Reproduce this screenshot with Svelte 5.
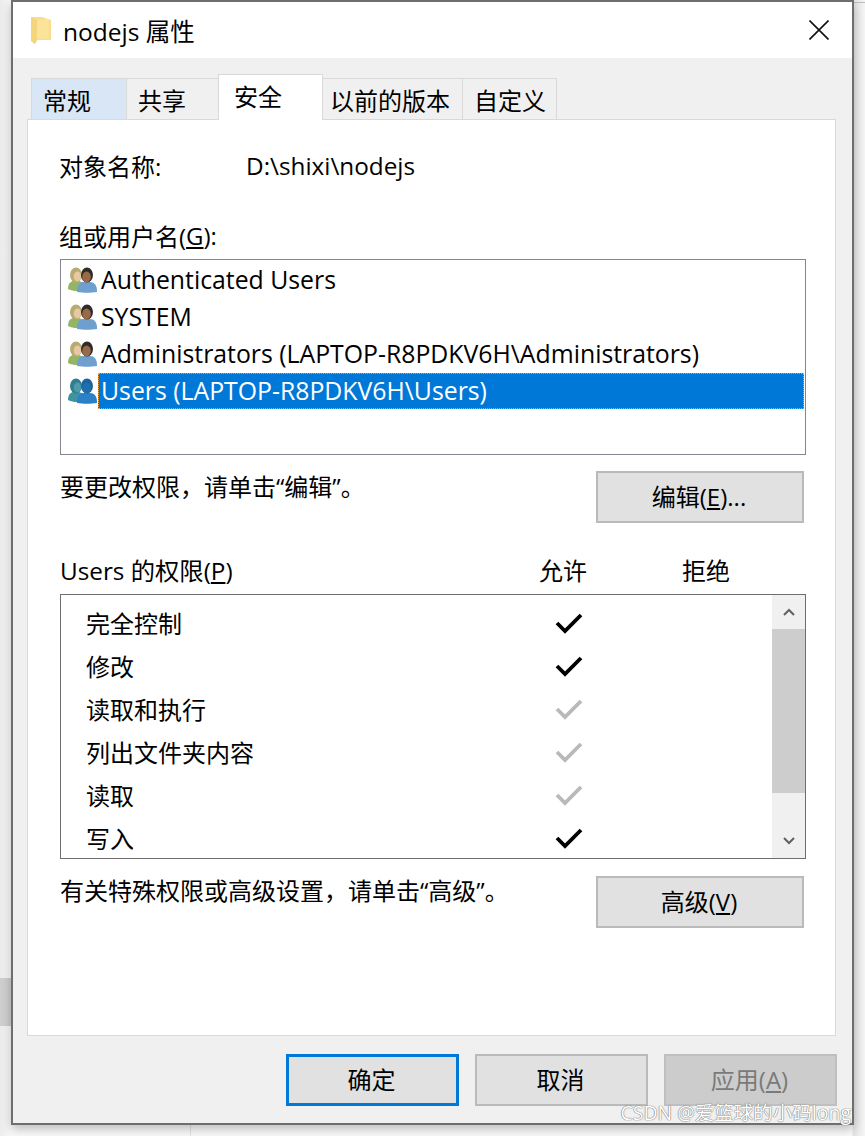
<script>
  const tabs = [
    { label: '常规', cls: 'hover' },
    { label: '共享', cls: '' },
    { label: '安全', cls: 'active' },
    { label: '以前的版本', cls: '' },
    { label: '自定义', cls: '' }
  ];

  const groups = [
    { name: 'Authenticated Users' },
    { name: 'SYSTEM' },
    { name: 'Administrators (LAPTOP-R8PDKV6H\\Administrators)' },
    { name: 'Users (LAPTOP-R8PDKV6H\\Users)', selected: true }
  ];

  // check: 0 = none, 1 = explicit, 2 = inherited (grey)
  const perms = [
    { name: '完全控制', check: 1 },
    { name: '修改', check: 1 },
    { name: '读取和执行', check: 2 },
    { name: '列出文件夹内容', check: 2 },
    { name: '读取', check: 2 },
    { name: '写入', check: 1 }
  ];
</script>

{#snippet users(selected)}
  <svg class="users" viewBox="0 0 29 26" width="29" height="26">
    <path d="M0 22c0-6 3-8 6-8h4c3 0 6 2 6 6v3c-5 1.500-11 1.500-16-1z" fill={selected ? '#3f93a0' : '#94b566'} />
    <ellipse cx="8" cy="8" rx="6" ry="7.500" fill={selected ? '#2f7f91' : '#b9ab6f'} />
    <ellipse cx="9.500" cy="9.500" rx="3.800" ry="5" fill={selected ? '#4f9aa8' : '#e6c9a0'} />
    <path d="M9 25c0-6 2-10 6-10h7c4 0 7 3 7 9v1c-6 1-14 1-20 0z" fill={selected ? '#2c80c8' : '#6f9fce'} />
    <ellipse cx="19" cy="8" rx="6" ry="7.500" fill={selected ? '#19659f' : '#2f2b28'} />
    <ellipse cx="18.500" cy="10" rx="4.300" ry="5.400" fill={selected ? '#1d70ad' : '#9a6a48'} />
  </svg>
{/snippet}

<div class="page">
  <div class="bg-block"></div>
  <div class="bg-line"></div>
  <div class="bg-top"></div>
  <div class="window">
    <header class="titlebar">
      <svg class="folder" viewBox="0 0 20 28" width="20" height="28">
        <path d="M0 1h11l9 3v20H6l-2 4-4-3z" fill="#f9dd8b" />
        <path d="M6 4l12-1v20H6z" fill="#fbe39a" />
        <path d="M0 1l6 3v20l-2 4-4-3z" fill="#f5d57c" />
      </svg>
      <span class="title">nodejs 属性</span>
      <svg class="close" viewBox="0 0 20 20" width="20" height="20">
        <path d="M0.500 0.500l19 19M19.500 0.500l-19 19" stroke="#111" stroke-width="1.600" fill="none" />
      </svg>
    </header>

    <div class="body">
      <nav class="tabs">
        {#each tabs as tab}
          <div class="tab {tab.cls}">{tab.label}</div>
        {/each}
      </nav>

      <section class="panel">
        <div class="object">
          <span class="object-label">对象名称:</span>
          <span class="object-path">D:\shixi\nodejs</span>
        </div>

        <div class="group-label">组或用户名(<u>G</u>):</div>
        <div class="listbox">
          {#each groups as group}
            <div class="group-row">
              {@render users(group.selected)}
              <span class="group-name" class:selected={group.selected}>{group.name}</span>
            </div>
          {/each}
        </div>

        <div class="action action-edit">
          <span>要更改权限，请单击“编辑”。</span>
          <button class="btn side">编辑(<u>E</u>)...</button>
        </div>

        <div class="perm-head">
          <span class="perm-title">Users 的权限(<u>P</u>)</span>
          <span class="perm-allow">允许</span>
          <span class="perm-deny">拒绝</span>
        </div>

        <div class="permbox">
          <div class="perm-rows">
            {#each perms as perm}
              <div class="perm-row">
                <span class="perm-name">{perm.name}</span>
                {#if perm.check}
                  <svg class="check" viewBox="0 0 28 22" width="28" height="22">
                    <path d="M2 11l8 8L26 3" fill="none" stroke={perm.check === 1 ? '#000' : '#b9b9b9'} stroke-width="3.800" />
                  </svg>
                {/if}
              </div>
            {/each}
          </div>
          <div class="scrollbar">
            <div class="arrow">
              <svg viewBox="0 0 12 8" width="12" height="8"><path d="M1 7l5-5 5 5" fill="none" stroke="#606060" stroke-width="2" /></svg>
            </div>
            <div class="thumb"></div>
            <div class="arrow">
              <svg viewBox="0 0 12 8" width="12" height="8"><path d="M1 1l5 5 5-5" fill="none" stroke="#606060" stroke-width="2" /></svg>
            </div>
          </div>
        </div>

        <div class="action action-adv">
          <span>有关特殊权限或高级设置，请单击“高级”。</span>
          <button class="btn side">高级(<u>V</u>)</button>
        </div>
      </section>

      <footer class="footer">
        <button class="btn foot default">确定</button>
        <button class="btn foot">取消</button>
        <button class="btn foot disabled">应用(<u>A</u>)</button>
      </footer>
    </div>
  </div>
  <div class="watermark">CSDN @爱篮球的小码long</div>
</div>

<style>
  :global(body) {
    margin: 0;
    background: #fff;
  }

  .page {
    position: relative;
    width: 865px;
    height: 1136px;
    overflow: hidden;
    padding-left: 11px;
    box-sizing: border-box;
    font-family: "Open Sans", "Noto Sans CJK SC", sans-serif;
    font-size: 24px;
    color: #000;
    background: linear-gradient(90deg, #ececec 0, #fafafa 11px, #fafafa 852px, #e4e4e4 853px, #f6f6f6 865px);
  }

  .bg-block {
    position: absolute;
    left: 0;
    top: 978px;
    width: 11px;
    height: 48px;
    background: #cfcfcf;
  }

  .bg-line {
    position: absolute;
    left: 190px;
    top: 1125px;
    width: 1px;
    height: 11px;
    background: #e2e2e2;
  }

  .bg-top {
    position: absolute;
    left: 853px;
    top: 2px;
    width: 12px;
    height: 1px;
    background: #bdbdbd;
  }

  .window {
    position: relative;
    width: 843px;
    height: 1125px;
    box-sizing: border-box;
    border: 2px solid #6e6e6e;
    background: #fff;
    display: flex;
    flex-direction: column;
    box-shadow: 0 4px 10px rgba(0, 0, 0, 0.25);
  }

  .titlebar {
    height: 56px;
    flex: none;
    display: flex;
    align-items: center;
    padding: 0 23px 0 18px;
  }

  .folder {
    margin-right: 12px;
  }

  .title {
    flex: 1;
    font-size: 24.500px;
  }

  .body {
    flex: 1;
    background: #f0f0f0;
    padding: 16px 14px 0;
    display: flex;
    flex-direction: column;
  }

  .tabs {
    display: flex;
    align-items: flex-end;
    height: 45px;
    padding-left: 5px;
    position: relative;
    z-index: 1;
  }

  .tab {
    height: 41px;
    box-sizing: border-box;
    border: 1px solid #d9d9d9;
    border-bottom: 0;
    margin-left: -1px;
    padding: 0 12px 0 11px;
    display: flex;
    align-items: center;
    font-size: 24px;
    white-space: nowrap;
    background: #f0f0f0;
  }

  .tab:nth-child(1) { width: 96px; }
  .tab:nth-child(2) { width: 93px; }
  .tab:nth-child(3) { width: 105px; }
  .tab:nth-child(4) { width: 141px; padding: 0 7px; }
  .tab:nth-child(5) { width: 95px; }

  .tab.hover {
    background: #d8e6f5;
  }

  .tab.active {
    background: #fff;
    height: 46px;
    margin-bottom: -1px;
    padding: 0 15px 5px;
  }

  .panel {
    height: 917px;
    box-sizing: border-box;
    background: #fff;
    border: 1px solid #d9d9d9;
    padding: 27px 30px 0 31px;
    flex: none;
    width: 809px;
  }

  .object {
    display: flex;
    height: 36px;
    align-items: center;
  }

  .object-label {
    width: 187px;
  }

  .object-path {
    font-size: 24.300px;
  }

  .group-label {
    height: 36px;
    margin-top: 34px;
    display: flex;
    align-items: center;
  }

  .listbox {
    margin: 6px 0 0 1px;
    height: 196px;
    width: 746px;
    box-sizing: border-box;
    border: 1px solid #828790;
    padding: 1px 1px;
  }

  .group-row {
    height: 37px;
    display: flex;
    align-items: center;
  }

  .users {
    flex: none;
    margin: 0 1px 0 6px;
  }

  .group-name {
    flex: 1;
    height: 36px;
    line-height: 35px;
    padding-left: 3px;
    box-sizing: border-box;
    white-space: nowrap;
    font-size: 24.800px;
  }

  .group-name.selected {
    background: #0078d7;
    color: #fff;
    outline: 1px dotted #f4a340;
    outline-offset: -1px;
  }

  .action {
    display: flex;
    justify-content: space-between;
    width: 744px;
    margin-left: 1px;
  }

  .action-edit {
    margin-top: 16px;
    height: 52px;
    line-height: 32px;
  }

  .action-adv {
    margin-top: 17px;
    height: 52px;
    line-height: 30px;
  }

  .btn {
    font: inherit;
    line-height: 1.2;
    color: #000;
    background: #e1e1e1;
    border: 2px solid #bababa;
    box-sizing: border-box;
    padding: 0 2px 0 0;
  }

  .btn.side {
    width: 208px;
    height: 52px;
  }

  .perm-head {
    margin: 28px 0 0 1px;
    height: 36px;
    display: flex;
    align-items: center;
  }

  .perm-title {
    width: 479px;
    font-size: 24.300px;
  }

  .perm-allow {
    width: 143px;
  }

  .permbox {
    margin: 7px 0 0 1px;
    width: 746px;
    height: 265px;
    box-sizing: border-box;
    border: 1px solid #6e6e6e;
    display: flex;
  }

  .perm-rows {
    flex: 1;
    padding: 6px 0 0 25px;
  }

  .perm-row {
    height: 43px;
    display: flex;
    align-items: center;
  }

  .perm-name {
    width: 469px;
    flex: none;
  }

  .check {
    flex: none;
  }

  .scrollbar {
    width: 33px;
    flex: none;
    background: #f0f0f0;
    display: flex;
    flex-direction: column;
  }

  .arrow {
    height: 34px;
    display: flex;
    align-items: center;
    justify-content: center;
    flex: none;
  }

  .thumb {
    height: 164px;
    background: #cdcdcd;
    flex: none;
  }

  .scrollbar .thumb + .arrow {
    margin-top: auto;
  }

  .footer {
    display: flex;
    justify-content: flex-end;
    gap: 16px;
    margin-top: 18px;
    width: 810px;
  }

  .btn.foot {
    width: 173px;
    height: 52px;
  }

  .btn.default {
    border: 3px solid #0078d7;
  }

  .btn.disabled {
    background: #cccccc;
    border-color: #bfbfbf;
    color: #7a7a7a;
  }

  .watermark {
    position: absolute;
    right: 14px;
    bottom: 10px;
    font-size: 19.500px;
    color: #fff;
    text-shadow: 0 0 1px #666, 0 0 1px #666;
    white-space: nowrap;
  }
</style>
